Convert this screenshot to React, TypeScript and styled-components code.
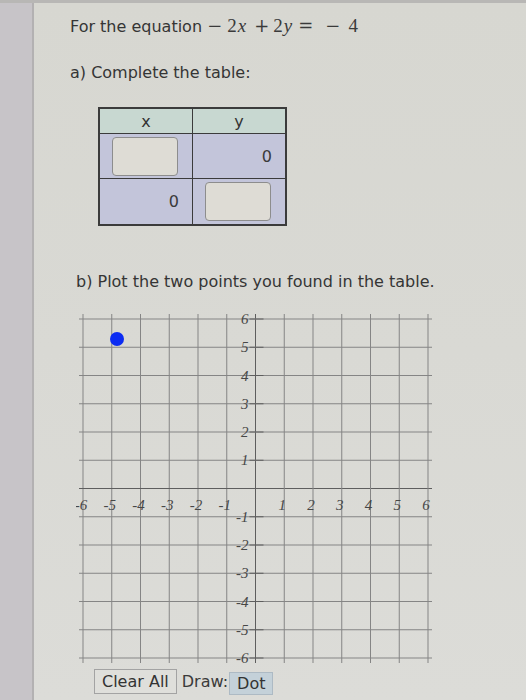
import styled, { createGlobalStyle } from "styled-components";

const GlobalStyle = createGlobalStyle`
  html, body {
    margin: 0;
    padding: 0;
  }
  body {
    background: #d8d8d3;
    font-family: "DejaVu Sans", "Liberation Sans", sans-serif;
    color: #353535;
  }
`;

const Page = styled.div`
  display: flex;
  min-height: 697px;
  border-top: 3px solid #b8b7b5;
`;

const Bezel = styled.div`
  width: 32px;
  flex-shrink: 0;
  background: #c7c4c8;
  border-right: 2px solid #b3b1b2;
`;

const Sheet = styled.div`
  flex: 1;
  padding-left: 36px;
  background: linear-gradient(180deg, #d7d7d1 0%, #d9d9d4 50%, #dcdcd8 100%);
`;

const Prompt = styled.div`
  margin-top: 11px;
  font-size: 16px;
  line-height: 24px;
  white-space: nowrap;
`;

const MathExpr = styled.span`
  display: inline-flex;
  align-items: baseline;
  color: #3a3a3a;
`;

const Op = styled.span<{ $before?: number; $after?: number }>`
  font-family: "DejaVu Serif", "Liberation Serif", serif;
  font-size: 18px;
  margin-left: ${({ $before = 0 }) => $before}px;
  margin-right: ${({ $after = 0 }) => $after}px;
`;

const Num = styled.span`
  font-family: "Liberation Serif", serif;
  font-size: 19px;
`;

const Var = styled.span`
  font-family: "Liberation Serif", serif;
  font-style: italic;
  font-size: 19px;
  margin-left: 1px;
`;

const Part = styled.div<{ $top: number; $indent?: number }>`
  margin-top: ${({ $top }) => $top}px;
  margin-left: ${({ $indent = 0 }) => $indent}px;
  font-size: 16px;
  line-height: 24px;
  white-space: nowrap;
`;

const ValueTable = styled.table`
  margin: 22px 0 0 28px;
  border-collapse: collapse;
  border: 2px solid #3b3b3b;
  font-size: 16px;
`;

const HeadCell = styled.th`
  width: 92px;
  height: 24px;
  padding: 0;
  background: #c8d8d1;
  border: 1.5px solid #3b3b3b;
  font-weight: normal;
  text-align: center;
  color: #333;
`;

const Cell = styled.td<{ $height: number }>`
  height: ${({ $height }) => $height}px;
  padding: 0 13px 0 12px;
  background: #c3c5da;
  border: 1.5px solid #3b3b3b;
  text-align: right;
  vertical-align: middle;
  color: #3a3a3a;
`;

const Entry = styled.input`
  display: block;
  width: 66px;
  height: 39px;
  box-sizing: border-box;
  background: #dedcd5;
  border: 1.5px solid #8d8d8d;
  border-radius: 4px;
  outline: none;
`;

const Graph = styled.svg`
  display: block;
  margin: 13px 0 0 6px;
`;

const Toolbar = styled.div`
  display: flex;
  align-items: center;
  margin-left: 24px;
  height: 25px;
  font-size: 16px;
`;

const ToolButton = styled.button<{ $active?: boolean }>`
  height: ${({ $active }) => ($active ? 23 : 25)}px;
  margin-top: ${({ $active }) => ($active ? 3 : 0)}px;
  padding: 0 7px;
  font-family: inherit;
  font-size: 16px;
  color: #333;
  background: ${({ $active }) => ($active ? "#c4d1d9" : "#dfdfdb")};
  border: 1px solid ${({ $active }) => ($active ? "#adbac4" : "#a3a3a3")};
  border-radius: 0;
`;

const ToolLabel = styled.span`
  margin: 0 1px 0 5px;
  color: #3a3a3a;
`;

const CELL_W = 28.75;
const CELL_H = 28.25;
const X0 = 7;
const Y0 = 12;
const STEPS = [-6, -5, -4, -3, -2, -1, 0, 1, 2, 3, 4, 5, 6];

const px = (v: number) => X0 + (v + 6) * CELL_W;
const py = (v: number) => Y0 + (6 - v) * CELL_H;

const labelStyle = {
  fontFamily: '"Liberation Serif", serif',
  fontStyle: "italic",
  fontSize: 15,
};

const CoordinatePlane = ({ dots }: { dots: [number, number][] }) => (
  <Graph width={370} height={362}>
    {STEPS.map((v) => (
      <g key={v} stroke={v === 0 ? "#5e5e5e" : "#858585"} strokeWidth={1}>
        <line x1={px(v)} y1={Y0 - 5} x2={px(v)} y2={py(-6) + 5} />
        <line x1={X0 - 4} y1={py(v)} x2={px(6) + 4} y2={py(v)} />
      </g>
    ))}
    {STEPS.filter((v) => v !== 0).map((v) => (
      <g key={`l${v}`} fill="#474747" style={labelStyle}>
        <line x1={px(0) - 6} y1={py(v)} x2={px(0) + 8} y2={py(v)} stroke="#5e5e5e" />
        <text x={px(0) - 7} y={py(v) + 5} textAnchor="end">
          {v < 0 ? `-${-v}` : v}
        </text>
        <text x={px(v) - 2} y={py(0) + 21} textAnchor="middle">
          {v < 0 ? `-${-v}` : v}
        </text>
      </g>
    ))}
    {dots.map(([x, y], i) => (
      <circle key={i} cx={x} cy={y} r={7} fill="#0c2cf2" />
    ))}
  </Graph>
);

export default function App() {
  return (
    <>
      <GlobalStyle />
      <Page>
        <Bezel />
        <Sheet>
          <Prompt>
            For the equation{" "}
            <MathExpr>
              <Op $after={5}>−</Op>
              <Num>2</Num>
              <Var>x</Var>
              <Op $before={8} $after={4}>+</Op>
              <Num>2</Num>
              <Var>y</Var>
              <Op $before={6} $after={12}>=</Op>
              <Op $after={8}>−</Op>
              <Num>4</Num>
            </MathExpr>
          </Prompt>

          <Part $top={22}>a) Complete the table:</Part>

          <ValueTable>
            <thead>
              <tr>
                <HeadCell>x</HeadCell>
                <HeadCell>y</HeadCell>
              </tr>
            </thead>
            <tbody>
              <tr>
                <Cell $height={44}>
                  <Entry aria-label="x value" />
                </Cell>
                <Cell $height={44}>0</Cell>
              </tr>
              <tr>
                <Cell $height={45}>0</Cell>
                <Cell $height={45}>
                  <Entry aria-label="y value" />
                </Cell>
              </tr>
            </tbody>
          </ValueTable>

          <Part $top={44} $indent={6}>
            b) Plot the two points you found in the table.
          </Part>

          <CoordinatePlane dots={[[41, 32]]} />

          <Toolbar>
            <ToolButton>Clear All</ToolButton>
            <ToolLabel>Draw:</ToolLabel>
            <ToolButton $active>Dot</ToolButton>
          </Toolbar>
        </Sheet>
      </Page>
    </>
  );
}
